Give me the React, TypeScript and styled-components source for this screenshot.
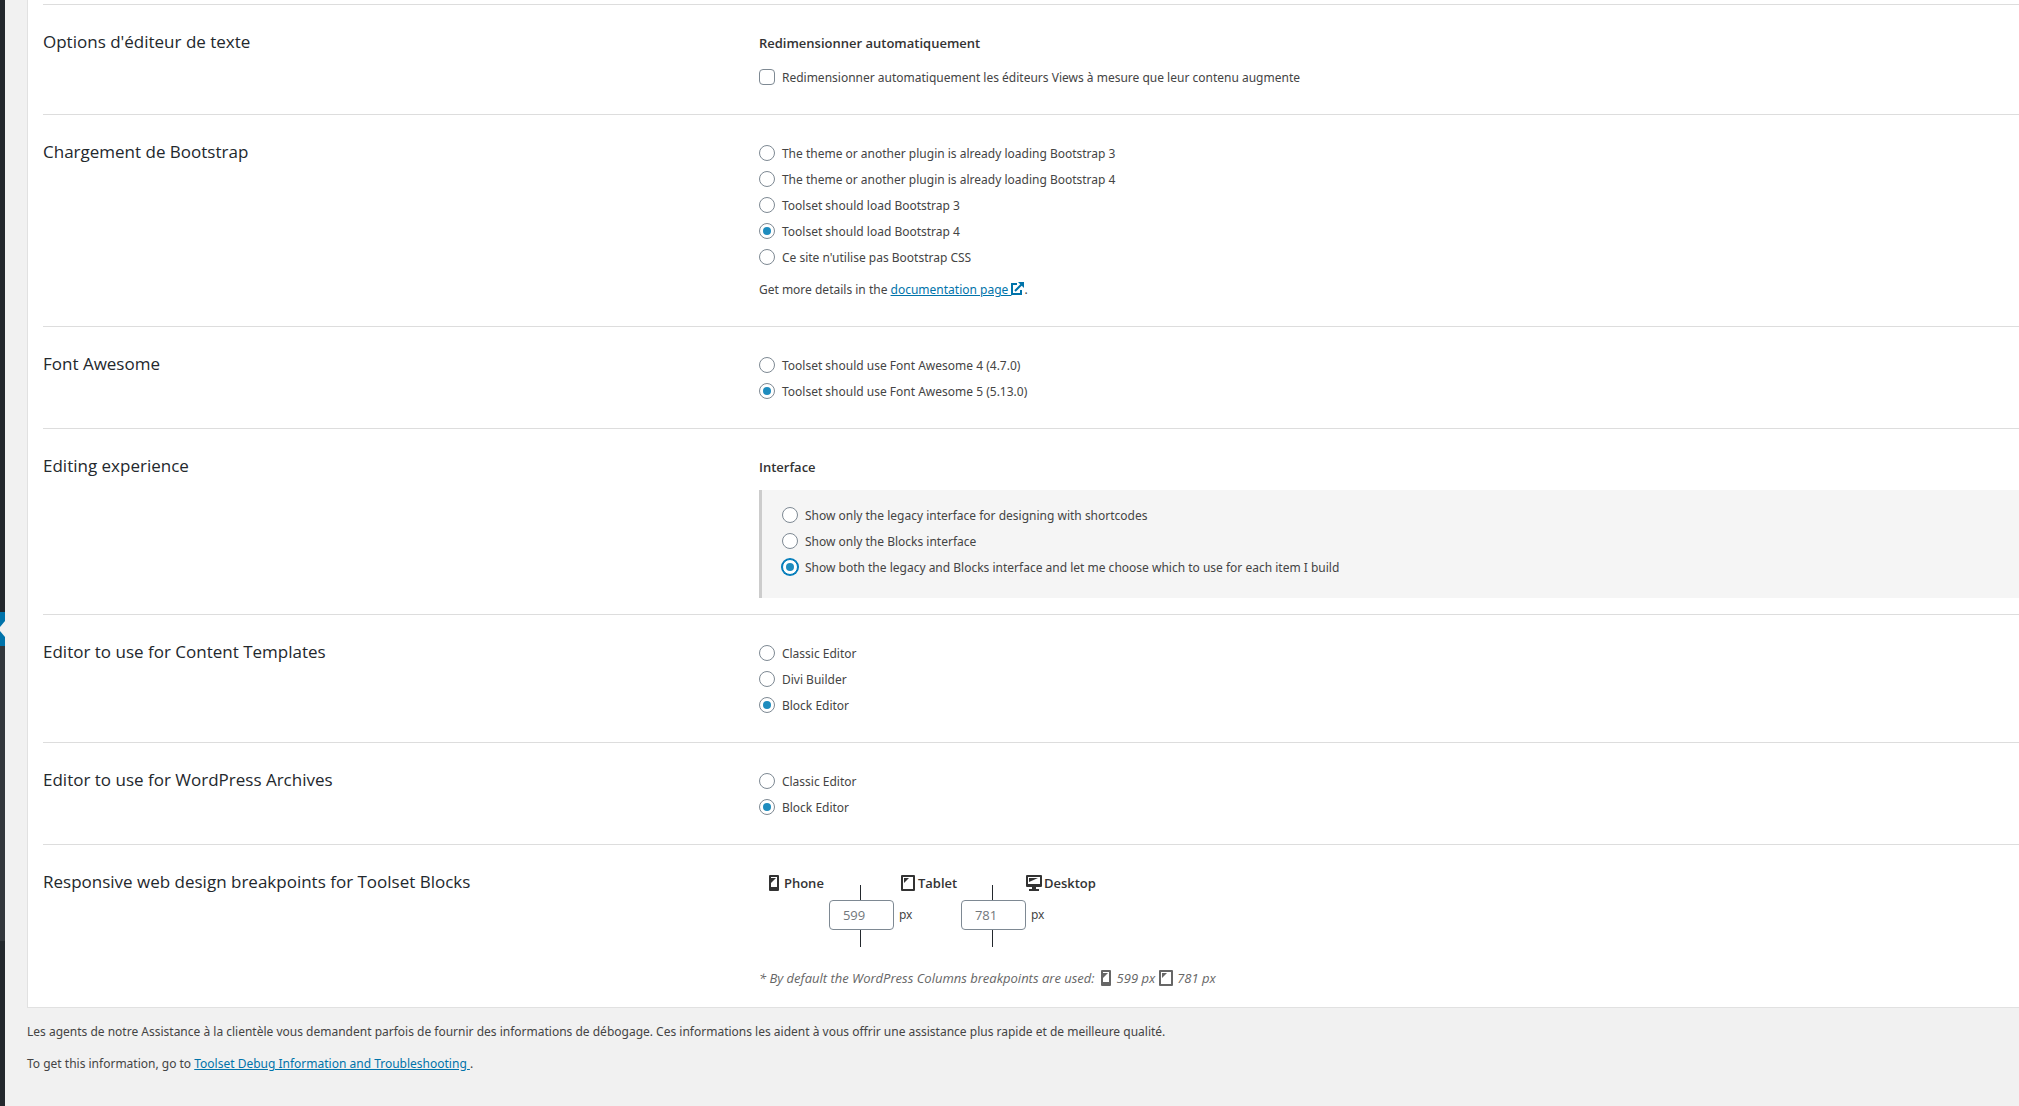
import React from "react";
import styled, { createGlobalStyle, css } from "styled-components";

const GlobalStyle = createGlobalStyle`
  *, *::before, *::after { box-sizing: border-box; }
  body {
    margin: 0;
    background: #f1f1f1;
    color: #444;
    font-family: "Noto Sans", "Open Sans", sans-serif;
    font-size: 12px;
    line-height: 26px;
  }
  p, h2, h3, fieldset { margin: 0; padding: 0; border: 0; }
`;

const Page = styled.div`
  display: flex;
  min-height: 100vh;
`;

const MenuEdge = styled.nav`
  display: flex;
  flex-direction: column;
  flex: 0 0 5px;
  background: #23282d;
`;

const MenuGap = styled.div`
  height: 612px;
`;

const MenuCurrent = styled.div`
  display: flex;
  align-items: center;
  height: 34px;
  background: #0073aa;
`;

const Submenu = styled.div`
  height: 295px;
  background: #32373c;
`;

const Main = styled.main`
  flex: 1;
  min-width: 0;
  padding-left: 22px;
`;

const Card = styled.div`
  padding: 4px 0 0 15px;
  background: #fff;
  border: solid #e1e1e1;
  border-width: 0 0 1px 1px;
`;

const Section = styled.section<{ $end?: number }>`
  display: grid;
  grid-template-columns: 25fr 44fr;
  padding: 25px 0 ${(p) => p.$end ?? 24}px;
  border-top: 1px solid #ddd;
`;

const Title = styled.h2`
  font-family: "Open Sans", "Noto Sans", sans-serif;
  font-size: 17px;
  font-weight: 400;
  line-height: 24px;
  color: #23282d;
`;

const Subtitle = styled.h3<{ $gap: number }>`
  margin-bottom: ${(p) => p.$gap}px;
  font-family: "Open Sans", "Noto Sans", sans-serif;
  font-size: 13px;
  font-weight: 600;
  color: #333;
`;

const Options = styled.fieldset<{ $boxed?: boolean }>`
  display: flex;
  flex-direction: column;
  align-items: flex-start;
  min-width: 0;
  ${(p) =>
    p.$boxed &&
    css`
      padding: 12px 20px 18px;
      background: #f5f5f5;
      border-left: 3px solid #ccc;
    `}
`;

const Option = styled.label`
  display: flex;
  align-items: center;
  gap: 7px;
  height: 26px;
`;

const OptionText = styled.span`
  padding-top: 2px;
`;

const controlBase = css`
  appearance: none;
  flex: none;
  width: 16px;
  height: 16px;
  margin: 0;
  background: #fff;
  border: 1px solid #7e8993;
`;

const Check = styled.input`
  ${controlBase}
  border-radius: 4px;
  &:checked { background: #1e8cbe; }
`;

const Radio = styled.input<{ $active?: boolean }>`
  ${controlBase}
  display: grid;
  place-items: center;
  border-radius: 50%;
  &:checked::before {
    content: "";
    width: 8px;
    height: 8px;
    border-radius: 50%;
    background: #1e8cbe;
  }
  ${(p) =>
    p.$active &&
    css`
      border-color: #007cba;
      box-shadow: 0 0 0 1px #007cba;
    `}
`;

const Note = styled.p`
  margin-top: 7px;
`;

const Link = styled.a`
  color: #0073aa;
  text-decoration: underline;
  svg { vertical-align: -1px; }
`;

const Breakpoints = styled.div`
  display: grid;
  grid-template-columns: 70px 65px 67px 65px auto;
  grid-template-rows: 30px 30px 17px;
  justify-content: start;
`;

const Device = styled.label<{ $indent: number }>`
  display: flex;
  align-items: center;
  gap: 2px;
  height: 26px;
  padding-left: ${(p) => p.$indent}px;
  font-family: "Open Sans", "Noto Sans", sans-serif;
  font-size: 13px;
  font-weight: 600;
  color: #333;
`;

const Tick = styled.span<{ $column: number; $row: number }>`
  grid-column: ${(p) => p.$column};
  grid-row: ${(p) => p.$row};
  place-self: end start;
  width: 1px;
  height: ${(p) => (p.$row === 1 ? 15 : 17)}px;
  margin-left: 31px;
  background: #23282d;
`;

const SizeInput = styled.input<{ $column: number }>`
  grid-column: ${(p) => p.$column};
  grid-row: 2;
  width: 100%;
  height: 30px;
  padding: 0 13px;
  border: 1px solid #7e8993;
  border-radius: 4px;
  background: #fff;
  color: #72777c;
  font: 13px/28px "Open Sans", "Noto Sans", sans-serif;
`;

const Unit = styled.span<{ $column: number }>`
  grid-column: ${(p) => p.$column};
  grid-row: 2;
  padding: 2px 0 0 5px;
`;

const Footnote = styled.p`
  display: flex;
  align-items: center;
  gap: 3px;
  margin-top: 18px;
  font-family: "Open Sans", "Noto Sans", sans-serif;
  font-size: 13px;
  font-style: italic;
  color: #666;
`;

const Footer = styled.footer`
  display: flex;
  flex-direction: column;
  gap: 6px;
  padding: 11px 0 24px;
`;

const PhoneIcon = () => (
  <svg width="16" height="16" viewBox="0 0 16 16" fill="currentColor" aria-hidden="true">
    <path fillRule="evenodd" d="M4 0h8a1 1 0 0 1 1 1v14a1 1 0 0 1-1 1H4a1 1 0 0 1-1-1V1a1 1 0 0 1 1-1zm1 2v10h6V2z" />
    <path d="M5 3h5L5 8z" />
  </svg>
);

const TabletIcon = () => (
  <svg width="16" height="16" viewBox="0 0 16 16" fill="currentColor" aria-hidden="true">
    <path fillRule="evenodd" d="M2 0h12a1 1 0 0 1 1 1v14a1 1 0 0 1-1 1H2a1 1 0 0 1-1-1V1a1 1 0 0 1 1-1zm1 2v12h10V2z" />
    <path d="M4 3h5L4 8z" />
  </svg>
);

const DesktopIcon = () => (
  <svg width="16" height="16" viewBox="0 0 16 16" fill="currentColor" aria-hidden="true">
    <path fillRule="evenodd" d="M1 0h14a1 1 0 0 1 1 1v10a1 1 0 0 1-1 1h-5v2h3v2H3v-2h3v-2H1a1 1 0 0 1-1-1V1a1 1 0 0 1 1-1zm1 2v7h12V2z" />
    <path d="M3 3h9L3 7z" />
  </svg>
);

const ExternalIcon = () => (
  <svg width="13" height="13" viewBox="0 0 13 13" fill="none" stroke="currentColor" strokeWidth="2" aria-hidden="true">
    <path d="M6 2H1v10h9V8M4 9l7-7" />
    <path d="M7 0h6v6z" fill="currentColor" stroke="none" />
  </svg>
);

type RadioGroupProps = {
  name: string;
  options: string[];
  selected: number;
  boxed?: boolean;
  active?: boolean;
};

const RadioGroup = ({ name, options, selected, boxed, active }: RadioGroupProps) => (
  <Options $boxed={boxed} aria-label={name}>
    {options.map((text, i) => (
      <Option key={text}>
        <Radio type="radio" name={name} defaultChecked={i === selected} $active={active && i === selected} />
        <OptionText>{text}</OptionText>
      </Option>
    ))}
  </Options>
);

export default function App() {
  return (
    <>
      <GlobalStyle />
      <Page>
        <MenuEdge>
          <MenuGap />
          <MenuCurrent>
            <svg width="5" height="16" viewBox="0 0 5 16" aria-hidden="true">
              <path d="M5 0L0 6v4l5 6z" fill="#f1f1f1" />
            </svg>
          </MenuCurrent>
          <Submenu />
        </MenuEdge>
        <Main>
          <Card>
            <Section>
              <Title>Options d'éditeur de texte</Title>
              <div>
                <Subtitle $gap={8}>Redimensionner automatiquement</Subtitle>
                <Options>
                  <Option>
                    <Check type="checkbox" />
                    <OptionText>
                      Redimensionner automatiquement les éditeurs Views à mesure que leur contenu augmente
                    </OptionText>
                  </Option>
                </Options>
              </div>
            </Section>
            <Section $end={23}>
              <Title>Chargement de Bootstrap</Title>
              <div>
                <RadioGroup
                  name="bootstrap"
                  selected={3}
                  options={[
                    "The theme or another plugin is already loading Bootstrap 3",
                    "The theme or another plugin is already loading Bootstrap 4",
                    "Toolset should load Bootstrap 3",
                    "Toolset should load Bootstrap 4",
                    "Ce site n'utilise pas Bootstrap CSS",
                  ]}
                />
                <Note>
                  Get more details in the{" "}
                  <Link href="#documentation">
                    documentation page <ExternalIcon />
                  </Link>
                  .
                </Note>
              </div>
            </Section>
            <Section>
              <Title>Font Awesome</Title>
              <RadioGroup
                name="font-awesome"
                selected={1}
                options={["Toolset should use Font Awesome 4 (4.7.0)", "Toolset should use Font Awesome 5 (5.13.0)"]}
              />
            </Section>
            <Section $end={16}>
              <Title>Editing experience</Title>
              <div>
                <Subtitle $gap={10}>Interface</Subtitle>
                <RadioGroup
                  name="interface"
                  boxed
                  active
                  selected={2}
                  options={[
                    "Show only the legacy interface for designing with shortcodes",
                    "Show only the Blocks interface",
                    "Show both the legacy and Blocks interface and let me choose which to use for each item I build",
                  ]}
                />
              </div>
            </Section>
            <Section>
              <Title>Editor to use for Content Templates</Title>
              <RadioGroup name="content-templates" selected={2} options={["Classic Editor", "Divi Builder", "Block Editor"]} />
            </Section>
            <Section>
              <Title>Editor to use for WordPress Archives</Title>
              <RadioGroup name="archives" selected={1} options={["Classic Editor", "Block Editor"]} />
            </Section>
            <Section $end={16}>
              <Title>Responsive web design breakpoints for Toolset Blocks</Title>
              <div>
                <Breakpoints>
                  <Device $indent={7} htmlFor="phone-width"><PhoneIcon />Phone</Device>
                  <Tick $column={2} $row={1} />
                  <Device $indent={6} htmlFor="tablet-width"><TabletIcon />Tablet</Device>
                  <Tick $column={4} $row={1} />
                  <Device as="span" $indent={0}><DesktopIcon />Desktop</Device>
                  <SizeInput id="phone-width" $column={2} defaultValue="599" />
                  <Unit $column={3}>px</Unit>
                  <SizeInput id="tablet-width" $column={4} defaultValue="781" />
                  <Unit $column={5}>px</Unit>
                  <Tick $column={2} $row={3} />
                  <Tick $column={4} $row={3} />
                </Breakpoints>
                <Footnote>
                  <span>* By default the WordPress Columns breakpoints are used:</span>
                  <PhoneIcon />
                  <span>599 px</span>
                  <TabletIcon />
                  <span>781 px</span>
                </Footnote>
              </div>
            </Section>
          </Card>
          <Footer>
            <p>
              Les agents de notre Assistance à la clientèle vous demandent parfois de fournir des informations de débogage. Ces
              informations les aident à vous offrir une assistance plus rapide et de meilleure qualité.
            </p>
            <p>
              To get this information, go to <Link href="#debug">Toolset Debug Information and Troubleshooting&nbsp;</Link>.
            </p>
          </Footer>
        </Main>
      </Page>
    </>
  );
}
